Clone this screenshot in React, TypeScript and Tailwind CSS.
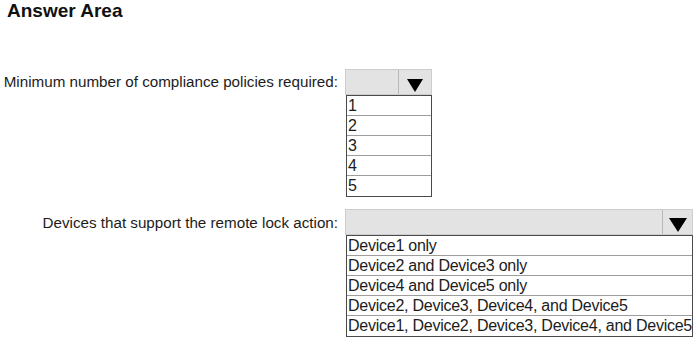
import React from 'react';

const counts = ['1', '2', '3', '4', '5'];

const devices = [
  'Device1 only',
  'Device2 and Device3 only',
  'Device4 and Device5 only',
  'Device2, Device3, Device4, and Device5',
  'Device1, Device2, Device3, Device4, and Device5',
];

function Arrow({ w, h }: { w: number; h: number }) {
  return (
    <svg width={w} height={h} viewBox={`0 0 ${w} ${h}`}>
      <polygon points={`0,0 ${w},0 ${w / 2},${h}`} fill="#000" />
    </svg>
  );
}

function Combo({
  width,
  height,
  arrowWidth,
  arrowSize,
}: {
  width: string;
  height: string;
  arrowWidth: string;
  arrowSize: [number, number];
}) {
  return (
    <div className={`flex bg-[#e3e3e3] border border-[#cdcdcd] ${width} ${height}`}>
      <div className="flex-1" />
      <div className={`flex justify-center items-end pb-[2px] border-l border-[#b9b9b9] ${arrowWidth}`}>
        <Arrow w={arrowSize[0]} h={arrowSize[1]} />
      </div>
    </div>
  );
}

export default function App() {
  return (
    <div className="w-[700px] h-[342px] bg-white text-[#1c1c1c] font-['Liberation_Sans',Arial,sans-serif] overflow-hidden">
      {/* Header */}
      <h1 className="pl-[7px] text-[19px] leading-[22px] font-bold text-[#111]">Answer Area</h1>

      {/* Compliance policies */}
      <div className="mt-[47px] flex items-start">
        <div className="w-[338px] h-[25px] flex items-center justify-end text-[15.2px] leading-[17px]">
          Minimum number of compliance policies required:
        </div>
        <div className="ml-[7px]">
          <Combo width="w-[87px]" height="h-[26px]" arrowWidth="w-[33px]" arrowSize={[16, 13]} />
          <div className="ml-[1px] w-[86px] border border-[#4a4a4a] bg-white">
            {counts.map((c, i) => (
              <div
                key={c}
                className={`h-[20px] pl-[1px] text-[16px] leading-[19px] ${i < counts.length - 1 ? 'border-b border-[#9d9d9d]' : ''}`}
              >
                {c}
              </div>
            ))}
          </div>
        </div>
      </div>

      {/* Remote lock */}
      <div className="mt-[12px] flex items-start">
        <div className="w-[338px] h-[26px] flex items-center justify-end text-[15.2px] leading-[17px]">
          Devices that support the remote lock action:
        </div>
        <div className="ml-[7px]">
          <Combo width="w-[348px]" height="h-[26px]" arrowWidth="w-[30px]" arrowSize={[18, 14]} />
          <div className="ml-[1px] w-[347px] border border-[#4a4a4a] bg-white">
            {devices.map((d, i) => (
              <div
                key={d}
                className={`h-[20px] pl-[1px] text-[16px] leading-[19px] whitespace-nowrap tracking-[-0.25px] ${i < devices.length - 1 ? 'border-b border-[#9d9d9d]' : ''}`}
              >
                {d}
              </div>
            ))}
          </div>
        </div>
      </div>
    </div>
  );
}
